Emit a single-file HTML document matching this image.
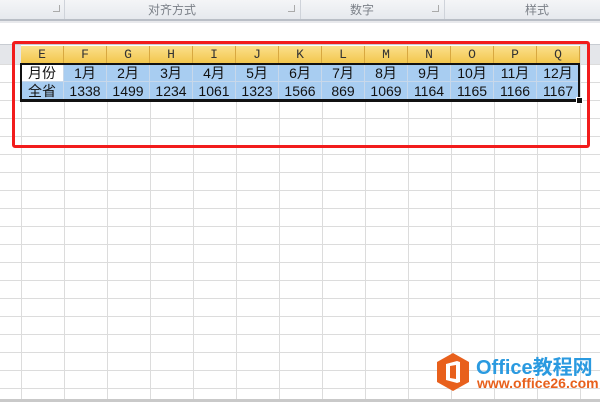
<!DOCTYPE html>
<html><head><meta charset="utf-8"><style>
body{margin:0;width:600px;height:402px;overflow:hidden;background:#fff;position:relative;font-family:"Liberation Sans","Noto Sans CJK SC",sans-serif}
.rib{position:absolute;left:0;top:0;width:600px;height:19px;background:linear-gradient(#f4f5f7,#e6e9ee);border-bottom:2px solid #b9bec6}
.rib span{position:absolute;top:1px;font-size:12px;color:#7b8088}
.sep{position:absolute;top:0;width:1px;height:19px;background:#cfd3da}
.dl{position:absolute;top:5px;width:6px;height:6px;border:1px solid #aaa;border-top:none;border-left:none}
.hl{position:absolute;left:0;width:600px;height:1px;background:#dcdcdc}
.vl{position:absolute;top:46px;width:1px;height:356px;background:#dcdcdc}
.hd{position:absolute;top:46px;height:18px;background:linear-gradient(#fbe08c,#f2c54a);border-right:1px solid #d8a840;box-sizing:border-box;font-family:"Liberation Mono",monospace;font-size:13px;text-align:center;line-height:18px;color:#333}
.c{position:absolute;height:18px;box-sizing:border-box;border-right:1px solid #c8d8ea;border-bottom:1px solid #c8d8ea;background:#a8cdf1;font-size:14px;text-align:center;line-height:18px;color:#111}
</style></head><body>
<div class="rib">
<span style="left:148px">对齐方式</span><span style="left:350px">数字</span><span style="left:525px">样式</span>
<div class="sep" style="left:64px"></div><div class="sep" style="left:300px"></div><div class="sep" style="left:444px"></div>
<div class="dl" style="left:53px"></div><div class="dl" style="left:288px"></div><div class="dl" style="left:432px"></div>
</div>
<div style="position:absolute;left:0;top:21px;width:600px;height:2px;background:#e8e9ec"></div>
<div style="position:absolute;left:0;top:44px;width:21px;height:20px;background:#e4e6ea"></div>
<div style="position:absolute;left:580px;top:44px;width:20px;height:20px;background:#e4e6ea"></div>
<div style="position:absolute;left:0;top:44px;width:600px;height:1px;background:#c8ccd2"></div>
<div class="hl" style="top:64px"></div><div class="hl" style="top:82px"></div><div class="hl" style="top:100px"></div><div class="hl" style="top:118px"></div><div class="hl" style="top:136px"></div><div class="hl" style="top:154px"></div><div class="hl" style="top:172px"></div><div class="hl" style="top:190px"></div><div class="hl" style="top:208px"></div><div class="hl" style="top:226px"></div><div class="hl" style="top:244px"></div><div class="hl" style="top:262px"></div><div class="hl" style="top:280px"></div><div class="hl" style="top:298px"></div><div class="hl" style="top:316px"></div><div class="hl" style="top:334px"></div><div class="hl" style="top:352px"></div><div class="hl" style="top:370px"></div><div class="hl" style="top:388px"></div>
<div class="vl" style="left:21px"></div><div class="vl" style="left:64px"></div><div class="vl" style="left:107px"></div><div class="vl" style="left:150px"></div><div class="vl" style="left:193px"></div><div class="vl" style="left:236px"></div><div class="vl" style="left:279px"></div><div class="vl" style="left:322px"></div><div class="vl" style="left:365px"></div><div class="vl" style="left:408px"></div><div class="vl" style="left:451px"></div><div class="vl" style="left:494px"></div><div class="vl" style="left:537px"></div><div class="vl" style="left:580px"></div>
<div class="hd" style="left:21px;width:43px">E</div><div class="hd" style="left:64px;width:43px">F</div><div class="hd" style="left:107px;width:43px">G</div><div class="hd" style="left:150px;width:43px">H</div><div class="hd" style="left:193px;width:43px">I</div><div class="hd" style="left:236px;width:43px">J</div><div class="hd" style="left:279px;width:43px">K</div><div class="hd" style="left:322px;width:43px">L</div><div class="hd" style="left:365px;width:43px">M</div><div class="hd" style="left:408px;width:43px">N</div><div class="hd" style="left:451px;width:43px">O</div><div class="hd" style="left:494px;width:43px">P</div><div class="hd" style="left:537px;width:43px">Q</div>
<div class="c" style="left:21px;top:64px;width:43px;background:#fff">月份</div>
<div class="c" style="left:64px;top:64px;width:43px">1月</div><div class="c" style="left:107px;top:64px;width:43px">2月</div><div class="c" style="left:150px;top:64px;width:43px">3月</div><div class="c" style="left:193px;top:64px;width:43px">4月</div><div class="c" style="left:236px;top:64px;width:43px">5月</div><div class="c" style="left:279px;top:64px;width:43px">6月</div><div class="c" style="left:322px;top:64px;width:43px">7月</div><div class="c" style="left:365px;top:64px;width:43px">8月</div><div class="c" style="left:408px;top:64px;width:43px">9月</div><div class="c" style="left:451px;top:64px;width:43px">10月</div><div class="c" style="left:494px;top:64px;width:43px">11月</div><div class="c" style="left:537px;top:64px;width:43px">12月</div>
<div class="c" style="left:21px;top:82px;width:43px">全省</div>
<div class="c" style="left:64px;top:82px;width:43px">1338</div><div class="c" style="left:107px;top:82px;width:43px">1499</div><div class="c" style="left:150px;top:82px;width:43px">1234</div><div class="c" style="left:193px;top:82px;width:43px">1061</div><div class="c" style="left:236px;top:82px;width:43px">1323</div><div class="c" style="left:279px;top:82px;width:43px">1566</div><div class="c" style="left:322px;top:82px;width:43px">869</div><div class="c" style="left:365px;top:82px;width:43px">1069</div><div class="c" style="left:408px;top:82px;width:43px">1164</div><div class="c" style="left:451px;top:82px;width:43px">1165</div><div class="c" style="left:494px;top:82px;width:43px">1166</div><div class="c" style="left:537px;top:82px;width:43px">1167</div>
<div style="position:absolute;left:20px;top:63px;width:556px;height:34px;border:2px solid #111;border-bottom-width:3px"></div>
<div style="position:absolute;left:576px;top:97px;width:5px;height:5px;background:#111;border:1px solid #fff"></div>
<div style="position:absolute;left:12px;top:41px;width:572px;height:101px;border:3px solid #f21c1c;border-radius:3px"></div>
<div style="position:absolute;left:0;top:399px;width:600px;height:3px;background:#c9c9c9"></div>
<svg style="position:absolute;left:436px;top:352px" width="34" height="40" viewBox="0 0 34 40"><polygon points="17,1 33,10 33,30 17,39 1,30 1,10" fill="#e8601c"/><path d="M10 12 L21 9 L24 10 L24 30 L21 31 L10 28 Z M14 14 L14 26 L20 27 L20 13 Z" fill="#fff"/></svg>
<div style="position:absolute;left:476px;top:351px;font-size:20px;font-weight:bold;color:#2a9ae0">Office教程网</div>
<div style="position:absolute;left:477px;top:375px;font-size:14px;font-weight:bold;color:#e8601c">www.office26.com</div>
</body></html>
